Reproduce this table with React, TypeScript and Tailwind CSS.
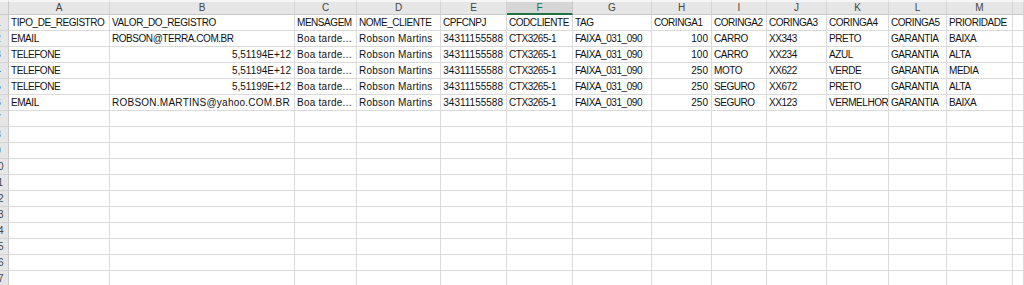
import React from "react";

type Cell = { v: string; num?: boolean };

const letters = ["A", "B", "C", "D", "E", "F", "G", "H", "I", "J", "K", "L", "M", ""];

const t = (v: string): Cell => ({ v });
const n = (v: string): Cell => ({ v, num: true });

const dataRows: Cell[][] = [
  [t("TIPO_DE_REGISTRO"), t("VALOR_DO_REGISTRO"), t("MENSAGEM"), t("NOME_CLIENTE"), t("CPFCNPJ"), t("CODCLIENTE"), t("TAG"), t("CORINGA1"), t("CORINGA2"), t("CORINGA3"), t("CORINGA4"), t("CORINGA5"), t("PRIORIDADE")],
  [t("EMAIL"), t("ROBSON@TERRA.COM.BR"), t("Boa tarde..."), t("Robson Martins"), n("34311155588"), t("CTX3265-1"), t("FAIXA_031_090"), n("100"), t("CARRO"), t("XX343"), t("PRETO"), t("GARANTIA"), t("BAIXA")],
  [t("TELEFONE"), n("5,51194E+12"), t("Boa tarde..."), t("Robson Martins"), n("34311155588"), t("CTX3265-1"), t("FAIXA_031_090"), n("100"), t("CARRO"), t("XX234"), t("AZUL"), t("GARANTIA"), t("ALTA")],
  [t("TELEFONE"), n("5,51194E+12"), t("Boa tarde..."), t("Robson Martins"), n("34311155588"), t("CTX3265-1"), t("FAIXA_031_090"), n("250"), t("MOTO"), t("XX622"), t("VERDE"), t("GARANTIA"), t("MEDIA")],
  [t("TELEFONE"), n("5,51199E+12"), t("Boa tarde..."), t("Robson Martins"), n("34311155588"), t("CTX3265-1"), t("FAIXA_031_090"), n("250"), t("SEGURO"), t("XX672"), t("PRETO"), t("GARANTIA"), t("ALTA")],
  [t("EMAIL"), t("ROBSON.MARTINS@yahoo.COM.BR"), t("Boa tarde..."), t("Robson Martins"), n("34311155588"), t("CTX3265-1"), t("FAIXA_031_090"), n("250"), t("SEGURO"), t("XX123"), t("VERMELHOR"), t("GARANTIA"), t("BAIXA")],
];

const TOTAL_ROWS = 17;

// Calibri-like proportions: narrow capitals, roomier lowercase
function cellClass(cell?: Cell) {
  if (!cell) return "h-4 border-r border-b border-[#dadada]";
  if (cell.num)
    return "h-4 overflow-hidden whitespace-nowrap border-r border-b border-[#dadada] pr-[3px] text-right text-[10px] leading-[15px]";
  if (/[a-z]/.test(cell.v))
    return "h-4 overflow-hidden whitespace-nowrap border-r border-b border-[#dadada] pl-[2px] text-[10px] leading-[15px] tracking-[0.25px]";
  return "h-4 overflow-hidden whitespace-nowrap border-r border-b border-[#dadada] pl-[2px] text-[10px] leading-[15px] tracking-[-0.45px]";
}

export default function App() {
  const rows: Cell[][] = Array.from({ length: TOTAL_ROWS }, (_, i) => dataRows[i] ?? []);

  return (
    <div className="h-[285px] w-[1024px] overflow-hidden bg-white text-[#111] [font-family:'Liberation_Sans',Arial,sans-serif]">
      <div className="grid grid-cols-[9px_101px_185px_62px_84px_66px_66px_79px_60px_55px_60px_62px_58px_66px_1fr]">
        {/* column headers */}
        <div className="h-[15px] border-t-2 border-r border-b border-t-[#f6f6f6] border-r-[#c9c9c9] border-b-[#c9c9c9] bg-[#e6e6e6]" />
        {letters.map((l, i) => {
          const selected = l === "F";
          return (
            <div
              key={"h" + i}
              className={
                selected
                  ? "flex h-[15px] items-center justify-center border-t-2 border-r border-b-2 border-t-[#f6f6f6] border-r-[#c9c9c9] border-b-[#217346] bg-[#d6d6d6] text-[10px] leading-none text-[#217346]"
                  : "flex h-[15px] items-center justify-center border-t-2 border-r border-b border-t-[#f6f6f6] border-r-[#d3d3d3] border-b-[#c9c9c9] bg-[#e6e6e6] text-[10px] leading-none text-[#444]"
              }
            >
              {l}
            </div>
          );
        })}

        {rows.map((row, r) => (
          <React.Fragment key={"r" + r}>
            <div className="h-4 overflow-hidden border-r border-b border-r-[#c9c9c9] border-b-[#d3d3d3] bg-[#e6e6e6]">
              <div className="-ml-[13px] w-[22px] text-center text-[10px] leading-[15px] text-[#444]">{r + 1}</div>
            </div>
            {letters.map((_, c) => (
              <div key={"c" + r + "-" + c} className={cellClass(row[c])}>
                {row[c]?.v ?? ""}
              </div>
            ))}
          </React.Fragment>
        ))}
      </div>
    </div>
  );
}
